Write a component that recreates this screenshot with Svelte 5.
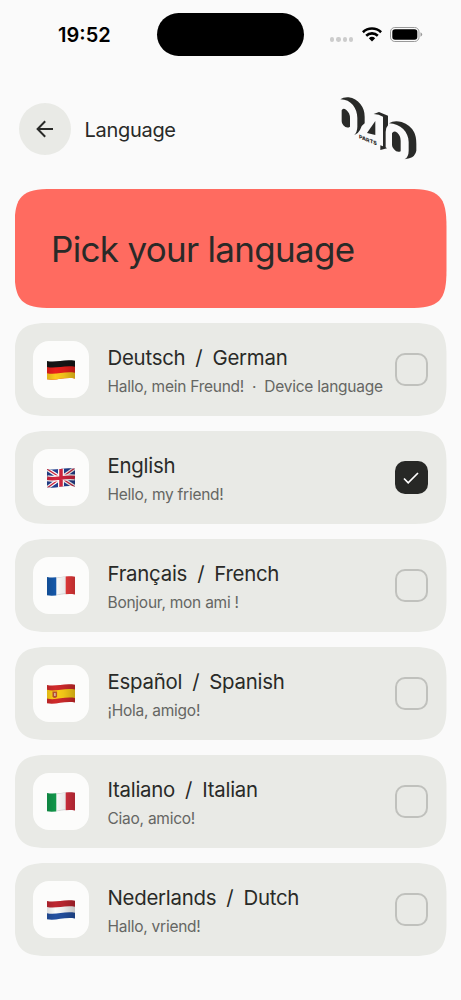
<script lang="ts">
	type Language = {
		code: string;
		name: string;
		english?: string;
		greeting: string;
		device?: boolean;
	};

	const languages: Language[] = [
		{ code: "de", name: "Deutsch", english: "German", greeting: "Hallo, mein Freund!", device: true },
		{ code: "en", name: "English", greeting: "Hello, my friend!" },
		{ code: "fr", name: "Français", english: "French", greeting: "Bonjour, mon ami !" },
		{ code: "es", name: "Español", english: "Spanish", greeting: "¡Hola, amigo!" },
		{ code: "it", name: "Italiano", english: "Italian", greeting: "Ciao, amico!" },
		{ code: "nl", name: "Nederlands", english: "Dutch", greeting: "Hallo, vriend!" },
	];

	let selected = $state("en");
</script>

{#snippet flag(code: string)}
	<svg class="flag" viewBox="0 0 28 20" aria-hidden="true">
		<defs>
			<clipPath id="wave-{code}">
				<path d="M0 .9C8 3.200 17-1.200 28 .8v17.600C17 16.600 9 21 0 19.200Z" />
			</clipPath>
			<linearGradient id="shade-{code}">
				<stop offset="0" stop-opacity=".12" />
				<stop offset=".3" stop-opacity="0" />
				<stop offset=".6" stop-opacity=".06" />
				<stop offset=".8" stop-opacity=".14" />
				<stop offset="1" stop-opacity=".22" />
			</linearGradient>
		</defs>
		<g clip-path="url(#wave-{code})">
			{#if code === "de"}
				<path fill="#151515" d="M0 0h28v10H0z" />
				<path fill="#e9201c" d="M0 7C9 9 17 5 28 6.700V20H0z" />
				<path fill="#fcca1d" d="M0 13.200C9 15.200 17 11 28 12.700V20H0z" />
			{:else if code === "en"}
				<path fill="#23408f" d="M0 0h28v20H0z" />
				<path stroke="#fff" stroke-width="3.600" d="m0 1 28 18M0 20 28 0" />
				<path stroke="#d3253f" stroke-width="1.300" d="m0 1 28 18M0 20 28 0" />
				<path fill="none" stroke="#fff" stroke-width="6" d="M14 0v20M0 10.300C9 12.300 17 8 28 9.600" />
				<path fill="none" stroke="#d3253f" stroke-width="3.500" d="M14 0v20M0 10.300C9 12.300 17 8 28 9.600" />
			{:else if code === "fr"}
				<path fill="#fafafa" d="M0 0h28v20H0z" />
				<path fill="#1457a8" d="M0 0h9.300v20H0z" />
				<path fill="#ef3b3c" d="M18.700 0H28v20h-9.300z" />
				<path class="edge" d="M9.300 1.900C13 1.200 16 .4 18.700.3M9.300 19.200c3-.6 6-1.300 9.400-1.500" />
			{:else if code === "es"}
				<path fill="#d02a2b" d="M0 0h28v20H0z" />
				<path fill="#fdcf18" d="M0 5.800C9 8 17 3.800 28 5.500v8.500C17 12.300 9 16.600 0 14.600Z" />
				<path fill="#b9502f" d="M5.500 7.500h4.600v5.200q-2.300 2.400-4.600 0z" />
				<path fill="#d9b29a" d="M7 9h1.700v3H7z" />
			{:else if code === "it"}
				<path fill="#fafafa" d="M0 0h28v20H0z" />
				<path fill="#11964a" d="M0 0h9.300v20H0z" />
				<path fill="#d8303f" d="M18.700 0H28v20h-9.300z" />
				<path class="edge" d="M9.300 1.900C13 1.200 16 .4 18.700.3M9.300 19.200c3-.6 6-1.300 9.400-1.500" />
			{:else}
				<path fill="#bd2631" d="M0 0h28v10H0z" />
				<path fill="#fafafa" d="M0 7C9 9 17 5 28 6.700V20H0z" />
				<path fill="#2450a0" d="M0 13.200C9 15.200 17 11 28 12.700V20H0z" />
			{/if}
			<path fill="url(#shade-{code})" d="M0 0h28v20H0z" />
		</g>
	</svg>
{/snippet}

<div class="screen">
	<div class="status">
		<span class="time">19:52</span>
		<div class="island"></div>
		<div class="indicators">
			<div class="dots"><i></i><i></i><i></i><i></i></div>
			<svg class="wifi" viewBox="0 0 20 15" fill="none" stroke="#000" stroke-width="2.600">
				<path d="M.9 5.200a13.200 13.200 0 0 1 18.200 0" />
				<path d="M4.200 8.700a8.400 8.400 0 0 1 11.600 0" />
				<path fill="#000" stroke="none" d="M6.800 11.300a4.700 4.700 0 0 1 6.400 0L10 14.600z" />
			</svg>
			<svg class="battery" viewBox="0 0 33 15">
				<rect x=".5" y=".5" width="28.500" height="14" rx="4.300" fill="none" stroke="#999" />
				<rect x="2.300" y="2.200" width="25" height="10.600" rx="2.800" />
				<path fill="#999" d="M30.500 5.300q1.700.8 1.700 2.200t-1.700 2.200z" />
			</svg>
		</div>
	</div>

	<header>
		<button class="back" aria-label="Back">
			<svg viewBox="0 0 18 18" fill="none" stroke="#292a28" stroke-width="2">
				<path d="M17 9H1.800M9.200 1.200 1.600 9l7.600 7.800" />
			</svg>
		</button>
		<span class="title">Language</span>
		<svg class="logo" viewBox="0 0 240 198" fill="#292a28">
			<path d="M1 10Q10 3 26 4 48 7 61 24 74 40 74 62V82Q64 88 60 102 54 114 42 118 52 108 52 92V66C52 38 34 10 1 10Z" />
			<path d="M5 43Q9 34 19 42 30 51 30 66V92Q20 99 10 88 5 83 5 76Z" />
			<path d="M101 54 117 48 144 59V88Q137 95 137 108V154L141 157 121 162V148L129 151V62Q117 54 101 54Z" />
			<path d="M81 111 106 75V117Z" />
			<path d="M147 82Q162 72 185 78 211 87 222 108 229 121 229 143V164Q226 181 208 187L194 190Q206 182 206 164V138C206 108 182 84 147 82Z" />
			<path d="M156 112Q161 102 172 110 182 119 182 134V166Q171 171 162 160 156 155 156 147Z" />
			<text x="0" y="0" transform="matrix(1 .4 0 1 57 127)">PARTS</text>
		</svg>
	</header>

	<main>
		<h1>Pick your language</h1>
		{#each languages as lang}
			<button class="card" onclick={() => (selected = lang.code)}>
				<span class="tile">{@render flag(lang.code)}</span>
				<span class="text">
					<span class="name">
						<span>{lang.name}</span>
						{#if lang.english}
							<span>/</span>
							<span>{lang.english}</span>
						{/if}
					</span>
					<span class="greeting">
						<span>{lang.greeting}</span>
						{#if lang.device}
							<span>·</span>
							<span>Device language</span>
						{/if}
					</span>
				</span>
				<span class="check" class:checked={selected === lang.code}>
					{#if selected === lang.code}
						<svg viewBox="0 0 16 12" fill="none" stroke="#fff" stroke-width="1.700">
							<path d="m1 6.500 4.200 4.300L15 1" />
						</svg>
					{/if}
				</span>
			</button>
		{/each}
	</main>
</div>

<style>
	:global(body) {
		background: #fafafa;
	}

	.screen {
		height: 1000px;
		overflow: hidden;
		background: #fafafa;
		color: #292a28;
		font-family: Inter, "Liberation Sans", sans-serif;
	}

	button {
		border: none;
		padding: 0;
		color: inherit;
		font: inherit;
		text-align: left;
	}

	.status {
		display: grid;
		grid-template-columns: 157px 147px 1fr;
		align-items: center;
		height: 43px;
		padding-top: 13px;
	}

	.time {
		padding-left: 58px;
		color: #000;
		font-size: 20px;
		font-weight: 600;
	}

	.island {
		height: 43px;
		border-radius: 22px;
		background: #000;
	}

	.indicators {
		display: flex;
		align-items: center;
		padding-left: 26px;
	}

	.dots {
		display: flex;
		gap: 2px;
		margin: 10px 9px 0 0;
	}

	.dots i {
		width: 4.300px;
		height: 4.300px;
		border-radius: 50%;
		background: #ccc;
	}

	.wifi {
		width: 20px;
		height: 15px;
		margin-right: 8px;
	}

	.battery {
		width: 33px;
		height: 15px;
	}

	header {
		display: flex;
		align-items: center;
		height: 66px;
		padding: 40px 41px 0 19px;
	}

	.back {
		display: flex;
		align-items: center;
		justify-content: center;
		width: 52px;
		height: 52px;
		border-radius: 50%;
		background: #e9eae6;
	}

	.back svg {
		width: 18px;
		height: 18px;
	}

	.title {
		margin: 2px 0 0 13.500px;
		font-size: 20px;
		letter-spacing: -0.3px;
	}

	.logo {
		width: 80px;
		height: 66px;
		margin-left: auto;
	}

	.logo text {
		font-size: 16px;
		font-weight: 800;
	}

	main {
		display: flex;
		flex-direction: column;
		gap: 15px;
		padding: 27px 14.500px 0;
	}

	h1 {
		display: flex;
		align-items: center;
		height: 119px;
		margin: 0;
		padding-left: 36.500px;
		background: #ff6b60;
		font-size: 35px;
		font-weight: 400;
		letter-spacing: -0.7px;
		clip-path: path("M0 38C0 7 7 0 38 0H394C425 0 432 7 432 38V81C432 112 425 119 394 119H38C7 119 0 112 0 81Z");
	}

	.card {
		display: flex;
		align-items: center;
		height: 93px;
		padding: 0 19px 0 18.500px;
		background: #e9eae6;
		clip-path: path("M0 32C0 8 8 0 32 0H400C424 0 432 8 432 32V61C432 85 424 93 400 93H32C8 93 0 85 0 61Z");
	}

	.tile {
		display: flex;
		align-items: center;
		justify-content: center;
		width: 56px;
		height: 57px;
		border-radius: 16px;
		background: #fcfcfb;
	}

	.flag {
		width: 28px;
		height: 20px;
	}

	.edge {
		fill: none;
		stroke: #c4c4c4;
		stroke-width: 0.6;
	}

	.text {
		flex: 1;
		display: flex;
		flex-direction: column;
		gap: 4px;
		margin: 2px 0 0 18.500px;
		white-space: nowrap;
	}

	.name {
		display: flex;
		gap: 10px;
		font-size: 20.400px;
		line-height: 28px;
		letter-spacing: -0.25px;
	}

	.greeting {
		display: flex;
		gap: 8px;
		color: #656663;
		font-size: 15.500px;
		line-height: 22px;
		letter-spacing: -0.25px;
	}

	.check {
		display: flex;
		align-items: center;
		justify-content: center;
		box-sizing: border-box;
		width: 33px;
		height: 33px;
		border: 2px solid #c0c1bd;
		border-radius: 10px;
	}

	.checked {
		border: none;
		background: #272826;
	}

	.check svg {
		width: 16px;
		height: 12px;
	}
</style>
